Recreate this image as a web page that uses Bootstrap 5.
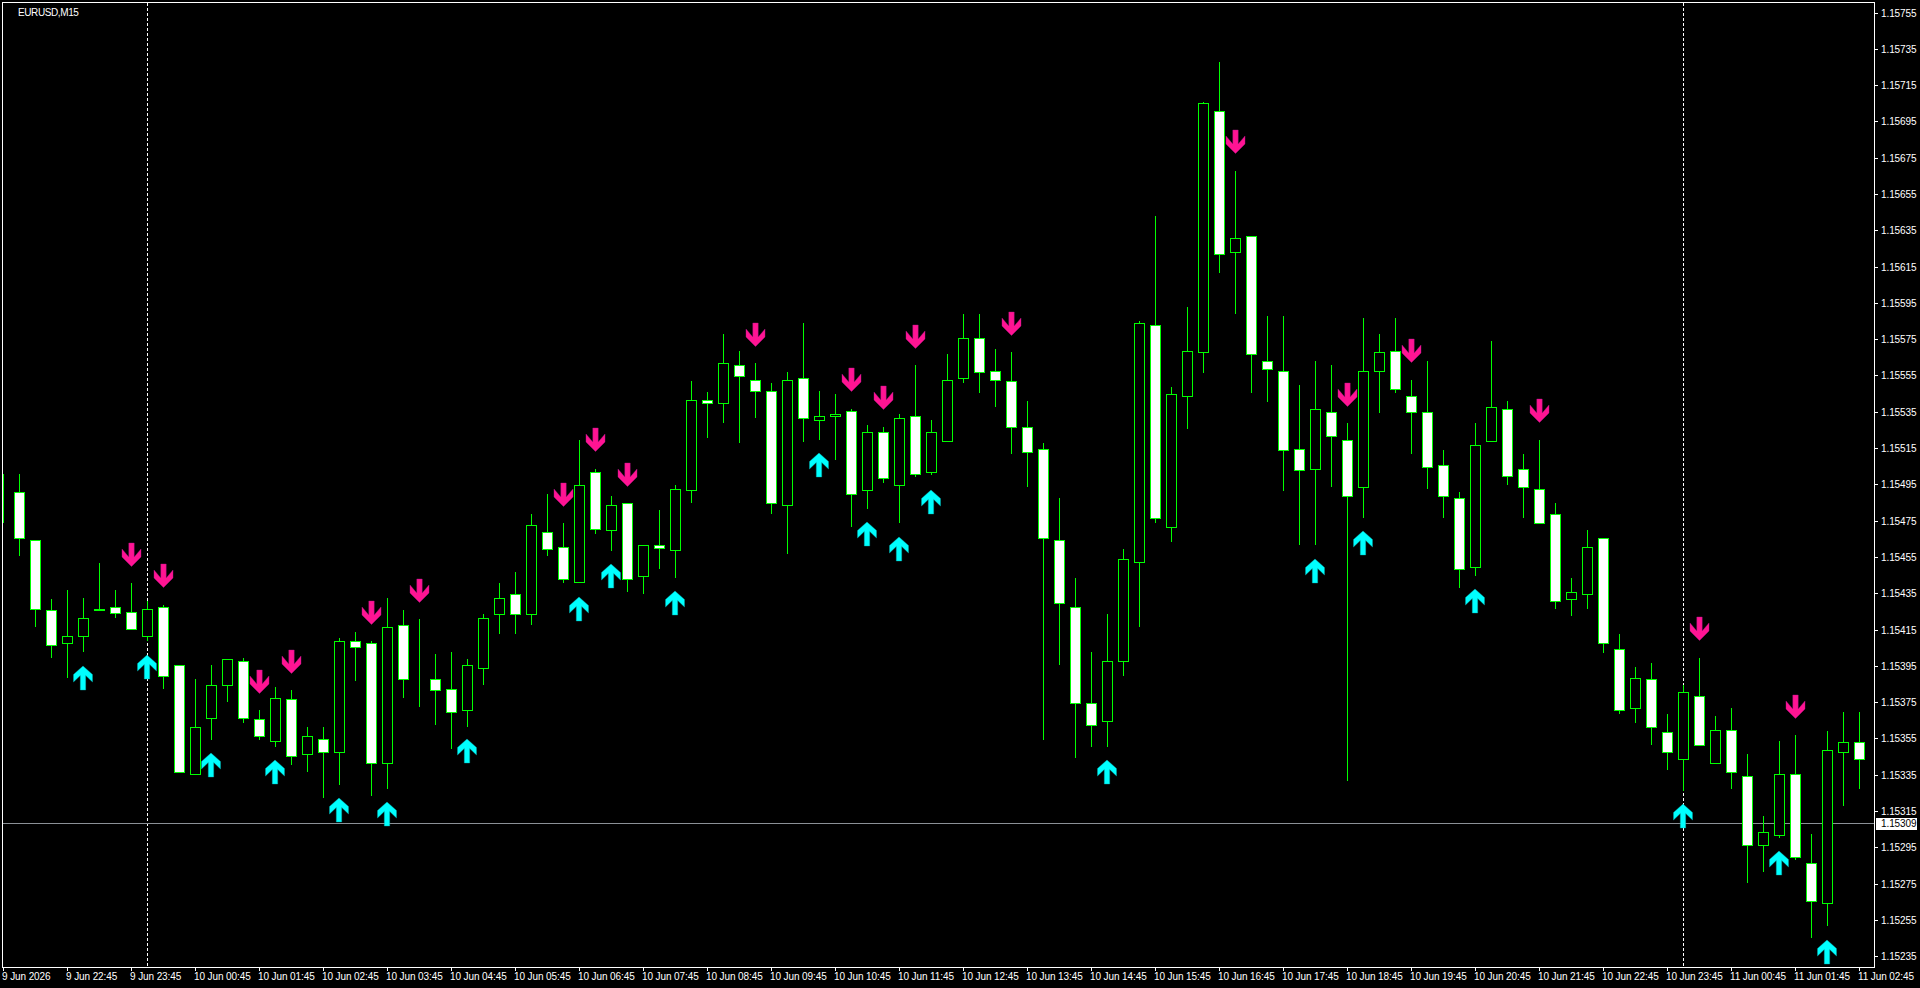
<!DOCTYPE html>
<html lang="en">

<head>
  <meta charset="UTF-8" />
  <meta name="viewport" content="width=device-width, initial-scale=1" />
  <title>EURUSD,M15</title>
  <link href="https://cdn.jsdelivr.net/npm/bootstrap@5.3.3/dist/css/bootstrap.min.css" rel="stylesheet">
  <style>
    body { background: #000; font-family: "Liberation Sans", Arial, sans-serif; font-size: 10px; line-height: 12px; color: #fff; }
    .terminal { height: 988px; padding: 2px 0 0 2px; }
    .plot { width: 1873px; height: 966px; border: 1px solid #fff; }
    .plot svg { width: 1871px; height: 964px; }
    .symbol { top: 4px; left: 15px; letter-spacing: -.4px; }
    .price-axis { width: 45px; height: 966px; }
    .price-stack { margin-top: -7.15px; }
    .price-row { height: 36.3px; }
    .price-row span { padding-top: 1px; }
    .tick-h { width: 3px; height: 1px; margin-right: 3px; background: #fff; }
    .price-now { top: 816px; left: 1px; width: 41px; height: 12px; padding-left: 5px; }
    .time-axis { height: 20px; }
    .time-cell { flex: 0 0 64px; }
    .tick-v { width: 1px; height: 3px; margin-left: 1px; background: #fff; }
    .label { letter-spacing: -.1px; }
  </style>
</head>

<body>
  <div class="terminal d-flex flex-column overflow-hidden">
    <div class="d-flex">
      <div class="plot position-relative flex-shrink-0">
        <svg id="grafico" class="d-block" viewBox="3 3 1871 964"></svg>
        <span class="symbol position-absolute">EURUSD,M15</span>
      </div>
      <div class="price-axis position-relative flex-shrink-0">
        <div class="price-stack" id="precios"></div>
        <div class="price-now position-absolute bg-white text-black label">1.15309</div>
      </div>
    </div>
    <div class="time-axis d-flex" id="horas"></div>
  </div>

  <script>
    // tipo, high, top, bottom, low (pixel y on the page), bar i sits at x = 3 + 16 * i
    const velas = [
      ['g',474,496,496,522],['w',474,492,538,555],['w',540,540,609,626],['w',599,610,645,657],
      ['g',590,636,643,677],['g',598,618,636,651],['g',563,609,610,610],['w',590,607,613,617],
      ['w',583,612,629,629],['g',601,609,636,640],['w',605,607,676,688],['w',665,665,772,772],
      ['g',679,727,774,774],['g',665,685,718,739],['g',659,659,685,701],['w',658,661,718,722],
      ['w',710,719,736,739],['g',687,698,741,746],['w',690,699,756,764],['g',727,736,754,771],
      ['w',727,739,752,797],['g',638,641,752,784],['w',632,641,647,680],['w',641,643,763,795],
      ['g',598,627,763,788],['w',610,625,679,697],['g',619,678,678,706],['w',654,679,690,724],
      ['w',652,689,712,748],['g',659,665,710,726],['g',614,618,668,684],['g',583,598,614,633],
      ['w',572,594,614,633],['g',514,525,614,624],['w',494,532,549,555],['w',523,547,579,582],
      ['g',440,485,582,582],['w',469,472,529,533],['g',496,505,530,550],['w',503,503,579,591],
      ['g',545,545,576,593],['w',510,545,548,568],['g',485,489,550,577],['g',381,400,490,502],
      ['w',392,400,403,437],['g',334,363,403,422],['w',351,365,376,442],['w',363,380,391,417],
      ['w',383,391,503,513],['g',372,380,505,553],['w',323,378,418,441],['g',391,416,420,439],
      ['g',394,414,416,459],['w',409,411,494,526],['g',425,432,490,508],['w',427,432,478,482],
      ['g',414,418,485,522],['w',365,416,474,476],['g',420,432,472,474],['g',354,380,441,441],
      ['g',314,338,378,382],['w',314,338,372,392],['w',349,371,380,406],['w',352,381,427,453],
      ['w',401,427,452,486],['w',443,449,538,739],['w',498,540,603,664],['w',578,607,703,757],
      ['w',652,703,725,746],['g',614,661,721,746],['g',549,559,661,675],['g',321,323,562,626],
      ['w',216,325,518,522],['g',387,394,527,541],['g',307,351,396,428],['g',102,103,352,372],
      ['w',62,111,254,272],['g',171,238,252,313],['w',236,236,354,392],['w',316,361,369,401],
      ['w',316,371,450,490],['w',385,449,470,544],['g',361,409,469,544],['w',365,412,436,486],
      ['w',423,440,496,780],['g',318,371,487,517],['g',334,352,371,412],['w',318,351,389,392],
      ['w',380,396,412,453],['w',361,412,467,488],['w',450,465,496,517],['w',492,498,569,587],
      ['g',423,445,567,575],['g',341,407,441,441],['w',401,409,476,484],['w',454,469,487,517],
      ['w',440,489,523,523],['w',503,514,601,608],['g',578,592,599,615],['g',530,547,594,608],
      ['w',538,538,643,652],['w',634,649,710,713],['g',667,678,708,722],['w',663,679,727,744],
      ['w',714,732,752,769],['g',685,692,759,790],['w',658,696,745,745],['g',716,730,763,763],
      ['w',708,730,772,788],['w',754,776,845,882],['g',816,832,845,871],['g',741,774,835,837],
      ['w',735,774,857,859],['w',834,863,901,937],['g',731,750,903,925],['g',712,742,752,805],
      ['w',712,742,759,788]
    ];

    // [centre x, apex y]
    const arribas = [[83,666],[147,655],[211,753],[275,760],[339,798],[387,802],[467,739],[579,597],[611,564],
      [675,591],[819,453],[867,522],[899,537],[931,490],[1107,760],[1315,559],[1363,531],[1475,589],[1683,804],
      [1779,851],[1827,940]];
    // [centre x, top y]
    const abajos = [[131,543],[163,564],[259,670],[291,650],[371,601],[419,579],[563,483],[595,428],[627,463],
      [755,323],[851,368],[883,386],[915,325],[1011,312],[1235,130],[1347,383],[1411,339],[1539,399],[1699,617],
      [1795,695]];

    const flechaArriba = '0,0 9.5,8.5 9.5,16 2.7,9.5 2.7,24 -2.7,24 -2.7,9.5 -9.5,16 -9.5,8.5';
    const flechaAbajo = '-2.7,0 2.7,0 2.7,14 9.5,6 9.5,14 0,23.5 -9.5,14 -9.5,6 -2.7,14';

    let svg = '';

    // cursor lines go behind the bars
    [147, 1683].forEach(x => {
      svg += `<line x1="${x + .5}" y1="3" x2="${x + .5}" y2="967" stroke="#fff" stroke-dasharray="3 2" shape-rendering="crispEdges"/>`;
    });
    svg += '<rect x="3" y="823" width="1871" height="1" fill="#8b9096" shape-rendering="crispEdges"/>';

    velas.forEach((v, i) => {
      const x = 3 + 16 * i;
      const [tipo, h, t, b, l] = v;
      svg += `<rect x="${x}" y="${h}" width="1" height="${l - h + 1}" fill="#0f0" shape-rendering="crispEdges"/>`;
      svg += `<rect x="${x - 4.5}" y="${t + .5}" width="10" height="${b - t}" fill="${tipo === 'w' ? '#fff' : '#000'}" stroke="#0f0" shape-rendering="crispEdges"/>`;
    });

    arribas.forEach(a => {
      svg += `<polygon points="${flechaArriba}" transform="translate(${a[0]} ${a[1]})" fill="#0ff" stroke="#00a8a8" stroke-width=".4"/>`;
    });
    abajos.forEach(a => {
      svg += `<polygon points="${flechaAbajo}" transform="translate(${a[0] + .5} ${a[1]})" fill="#ff1493" stroke="#b0148c" stroke-width=".4"/>`;
    });

    document.getElementById('grafico').innerHTML = svg;

    // price scale
    let precios = '';
    for (let p = 115755; p >= 115235; p -= 20) {
      precios += `<div class="price-row d-flex align-items-center"><i class="tick-h"></i><span class="label">${(p / 100000).toFixed(5)}</span></div>`;
    }
    document.getElementById('precios').innerHTML = precios;

    // time scale, one label each 4 bars
    const pad = n => String(n).padStart(2, '0');
    let horas = '<div class="time-cell"><i class="tick-v d-block"></i><span class="label">9 Jun 2026</span></div>';
    for (let k = 1; k <= 29; k++) {
      const total = 22 + (k - 1);
      const dia = 9 + Math.floor(total / 24);
      horas += `<div class="time-cell"><i class="tick-v d-block"></i><span class="label">${dia} Jun ${pad(total % 24)}:45</span></div>`;
    }
    document.getElementById('horas').innerHTML = horas;
  </script>
  <script src="https://cdn.jsdelivr.net/npm/bootstrap@5.3.3/dist/js/bootstrap.bundle.min.js"></script>
</body>

</html>
